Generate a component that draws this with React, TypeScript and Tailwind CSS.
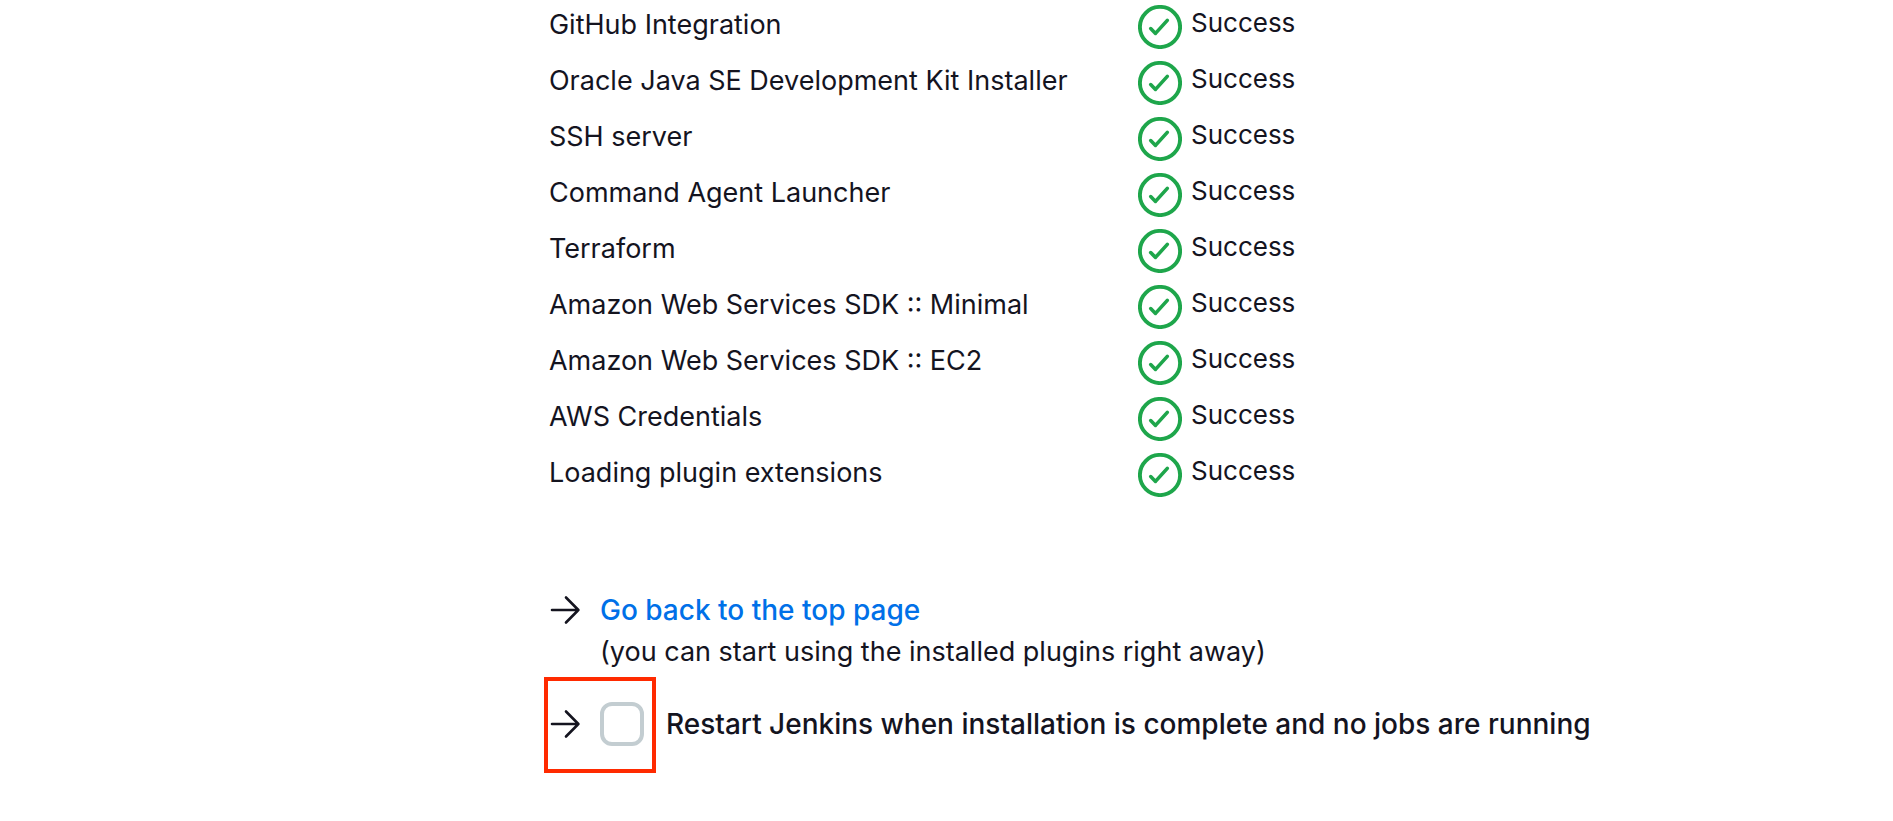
const plugins = [
  "GitHub Integration",
  "Oracle Java SE Development Kit Installer",
  "SSH server",
  "Command Agent Launcher",
  "Terraform",
  "Amazon Web Services SDK :: Minimal",
  "Amazon Web Services SDK :: EC2",
  "AWS Credentials",
  "Loading plugin extensions",
];

function SuccessIcon() {
  return (
    <svg className="size-11 shrink-0" viewBox="0 0 44 44" fill="none" stroke="#1ea64b" aria-hidden="true">
      <circle cx="22" cy="22" r="20.1" strokeWidth="3.9" />
      <path d="M12.7 23.6 L17.5 28.4 L29.3 15.4" strokeWidth="3.6" strokeLinecap="round" strokeLinejoin="round" />
    </svg>
  );
}

function ArrowIcon() {
  return (
    <svg
      className="h-8 w-8 shrink-0"
      viewBox="0 0 32 32"
      fill="none"
      stroke="currentColor"
      strokeWidth="2.6"
      strokeLinecap="round"
      strokeLinejoin="round"
      aria-hidden="true"
    >
      <path d="M3 16 H29.4 M17 3.5 L29.4 16 L17 28.5" />
    </svg>
  );
}

export default function App() {
  return (
    <main className="min-h-screen bg-white pl-[29%] font-['Inter',sans-serif] text-[27px] leading-10 text-[#14141f]">
      <table className="border-collapse text-left">
        <tbody>
          {plugins.map((name) => (
            <tr key={name} className="h-14">
              <th scope="row" className="w-[589px] pt-[5px] align-top font-normal whitespace-nowrap">
                {name}
              </th>
              <td className="p-0 align-top">
                <div className="flex items-start gap-[9px] pt-[5px]">
                  <SuccessIcon />
                  <span className="-mt-0.5 text-[26px]">Success</span>
                </div>
              </td>
            </tr>
          ))}
        </tbody>
      </table>

      <section className="mt-[86px]">
        <div className="flex items-start gap-[19px]">
          <div className="flex h-10 items-center">
            <ArrowIcon />
          </div>
          <div className="leading-[42px]">
            <a href="#top" className="block text-[28px] leading-[41px] font-medium text-[#0070e8]">
              Go back to the top page
            </a>
            <p>(you can start using the installed plugins right away)</p>
          </div>
        </div>

        <div className="relative mt-[27px] flex h-12 items-center">
          <ArrowIcon />
          <input
            id="restart"
            type="checkbox"
            className="ml-[19px] size-11 shrink-0 appearance-none rounded-xl border-4 border-[#c3cdd1] bg-white checked:bg-[#0070e8]"
          />
          <label htmlFor="restart" className="ml-[22px] text-[28px] font-medium whitespace-nowrap">
            Restart Jenkins when installation is complete and no jobs are running
          </label>
          <div className="pointer-events-none absolute -top-[23px] -left-[5px] h-24 w-28 border-4 border-[#ff2a00]" />
        </div>
      </section>
    </main>
  );
}
